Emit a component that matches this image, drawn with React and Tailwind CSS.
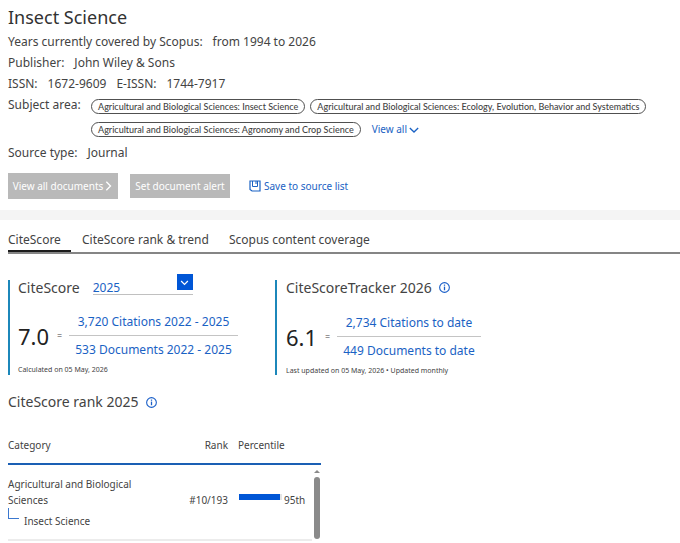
import React from "react";

const facts = "flex text-[12px] leading-[21px]";

function Chip({ children }) {
  return (
    <span className="rounded-full border border-[#505050] px-[6px] font-['Lato',sans-serif] text-[9px] leading-[13px] font-medium whitespace-nowrap">
      {children}
    </span>
  );
}

function Chevron({ className, d, width = 1.6 }) {
  return (
    <svg viewBox="0 0 12 12" className={className} fill="none" stroke="currentColor" strokeWidth={width} aria-hidden="true">
      <path d={d} />
    </svg>
  );
}

function Info({ label }) {
  return (
    <button type="button" aria-label={label} className="text-[#1a5fc8]">
      <svg viewBox="0 0 12 12" className="size-[11px]" fill="none" stroke="currentColor" aria-hidden="true">
        <circle cx="6" cy="6" r="5.3" strokeWidth="1.2" />
        <path d="M6 5v4" strokeWidth="1.4" />
        <path d="M6 2.8v1.3" strokeWidth="1.4" />
      </svg>
    </button>
  );
}

function Score({ value, top, bottom }) {
  return (
    <div className="flex items-center">
      <span className="text-[22px] leading-[32px] text-[#222]">{value}</span>
      <span className="ml-[8px] text-[9px]">=</span>
      <div className="ml-[7px] flex flex-col text-center text-[12px] leading-[27px] text-[#1a62c4]">
        <a href="#citations" className="border-b border-[#c4c4c4] px-[6px]">{top}</a>
        <a href="#documents" className="px-[6px]">{bottom}</a>
      </div>
    </div>
  );
}

export default function App() {
  return (
    <main className="bg-white font-['Noto_Sans',sans-serif] text-[#434343]">
      <header className="px-[8px] pt-[4px]">
        <h1 className="text-[18px] leading-[26px] text-[#323232]">Insect Science</h1>
        <dl className="pt-[1px]">
          <div className={facts + " gap-[10px]"}>
            <dt>Years currently covered by Scopus:</dt>
            <dd>from 1994 to 2026</dd>
          </div>
          <div className={facts + " gap-[10px]"}>
            <dt>Publisher:</dt>
            <dd>John Wiley &amp; Sons</dd>
          </div>
          <div className={facts + " gap-[10px]"}>
            <dt>ISSN:</dt>
            <dd>1672-9609</dd>
            <dt>E-ISSN:</dt>
            <dd>1744-7917</dd>
          </div>
          <div className={facts}>
            <dt className="w-[83px] shrink-0">Subject area:</dt>
            <dd className="flex min-w-0 flex-1 flex-wrap items-center gap-x-[5px] gap-y-[8px] pt-[5px]">
              <Chip>Agricultural and Biological Sciences: Insect Science</Chip>
              <Chip>Agricultural and Biological Sciences: Ecology, Evolution, Behavior and Systematics</Chip>
              <Chip>Agricultural and Biological Sciences: Agronomy and Crop Science</Chip>
              <button type="button" className="ml-[6px] flex items-center gap-[2px] text-[10px] leading-[15px] text-[#1a62c4]">
                View all
                <Chevron className="size-[10px]" d="M1 3.5l5 5 5-5" />
              </button>
            </dd>
          </div>
          <div className={facts + " mt-[5px] gap-[10px]"}>
            <dt>Source type:</dt>
            <dd>Journal</dd>
          </div>
        </dl>
        <div className="mt-[10px] flex items-center text-[10px]">
          <button type="button" className="flex h-[26px] w-[110px] items-center justify-center bg-[#b9b9b9] text-white">
            View all documents
            <Chevron className="size-[10px]" d="M4 1l5 5-5 5" />
          </button>
          <button type="button" className="ml-[12px] h-[24px] w-[100px] bg-[#b9b9b9] text-white">Set document alert</button>
          <button type="button" className="ml-[19px] flex items-center gap-[3px] text-[#1a62c4]">
            <svg viewBox="0 0 12 12" className="size-[12px]" fill="none" stroke="currentColor" aria-hidden="true">
              <path d="M1 1h10v10H3L1 9.500z" strokeWidth="1.2" />
              <path d="M3.500 1v5.500h5V1" />
              <path d="M7 1v3" />
            </svg>
            Save to source list
          </button>
        </div>
      </header>

      <div className="mt-[11px] h-[10px] bg-[#f4f4f4]" />

      <nav className="ml-[8px] mt-[8px] flex h-[26px] gap-[11px] border-b-2 border-[#858585] text-[12px] leading-[23px]">
        <a href="#citescore" aria-current="page" className="w-[63px] border-b-2 border-[#1c1c1c]">CiteScore</a>
        <a href="#trend">CiteScore rank &amp; trend</a>
        <a href="#coverage" className="ml-[9px]">Scopus content coverage</a>
      </nav>

      <div className="mt-[26px] flex px-[8px]">
        <section className="flex w-[267px] flex-col">
          <div className="flex-1 border-l-2 border-[#1c87ba] pl-[8px]">
            <div className="flex h-[15px] items-end gap-[13px]">
              <label htmlFor="year" className="text-[14px] leading-[14px]">CiteScore</label>
              <div className="flex h-[21px] w-[100px] shrink-0 items-start border-b border-[#c0c0c0]">
                <select id="year" defaultValue="2025" className="h-[20px] w-[84px] appearance-none self-end pt-[8px] text-[12px] leading-[12px] text-[#1a62c4]">
                  <option>2025</option>
                  <option>2024</option>
                </select>
                <span className="flex size-[16px] items-center justify-center bg-[#0056d6] text-white">
                  <Chevron className="size-[9px]" d="M1.5 4L6 8.5 10.500 4" />
                </span>
              </div>
            </div>
            <div className="mt-[13px]">
              <Score value="7.0" top="3,720 Citations 2022 - 2025" bottom="533 Documents 2022 - 2025" />
            </div>
            <p className="mt-[2px] text-[7px] leading-[9px]">Calculated on 05 May, 2026</p>
          </div>
        </section>
        <section className="border-l-2 border-[#1c87ba] pl-[9px]">
          <h2 className="flex h-[14px] items-center gap-[7px] text-[14px]">
            CiteScoreTracker 2026
            <Info label="About CiteScoreTracker" />
          </h2>
          <div className="mt-[15px]">
            <Score value="6.1" top="2,734 Citations to date" bottom="449 Documents to date" />
          </div>
          <p className="mt-[2px] text-[7px] leading-[9px]">Last updated on 05 May, 2026 • Updated monthly</p>
        </section>
      </div>

      <section className="px-[8px] pt-[16px]">
        <h2 className="flex items-center gap-[8px] text-[14px] leading-[22px]">
          CiteScore rank 2025
          <Info label="About CiteScore rank" />
        </h2>
        <table className="mt-[21px] w-[313px] table-fixed text-left text-[10px] leading-[16px]">
          <thead>
            <tr className="h-[30px] border-b-2 border-[#1a5fb4] align-top">
              <th className="w-[180px] pt-[3px] font-normal">Category</th>
              <th className="w-[40px] pt-[3px] text-right font-normal">Rank</th>
              <th className="w-[84px] pt-[3px] pl-[10px] font-normal">Percentile</th>
              <th aria-hidden="true" className="w-[9px]" />
            </tr>
          </thead>
          <tbody>
            <tr className="align-top">
              <td className="border-b-2 border-[#ececec] pt-[11px] pb-[10px]">
                <div className="w-[135px]">Agricultural and Biological Sciences</div>
                <div className="flex">
                  <span className="h-[11px] w-[11px] border-b border-l border-[#3b78cf]" />
                  <span className="mt-[5px] ml-[5px]">Insect Science</span>
                </div>
              </td>
              <td className="border-b-2 border-[#ececec] pt-[27px] text-right whitespace-nowrap">#10/193</td>
              <td className="border-b-2 border-[#ececec] pt-[27px] pl-[11px]">
                <div className="flex">
                  <span className="mt-[2px] h-[6px] w-[43px] bg-[#e4e4e4]">
                    <span className="block h-full w-[95%] bg-[#0056d6]" />
                  </span>
                  <span className="ml-[2px]">95th</span>
                </div>
              </td>
              <td aria-hidden="true" className="pt-[5px]">
                <div className="flex flex-col items-center gap-[4px]">
                  <svg viewBox="0 0 6 3" className="h-[3px] w-[6px] fill-[#8a8a8a]"><path d="M3 0l3 3H0z" /></svg>
                  <span className="h-[62px] w-[6px] rounded-full bg-[#8a8a8a]" />
                </div>
              </td>
            </tr>
          </tbody>
        </table>
      </section>
    </main>
  );
}
